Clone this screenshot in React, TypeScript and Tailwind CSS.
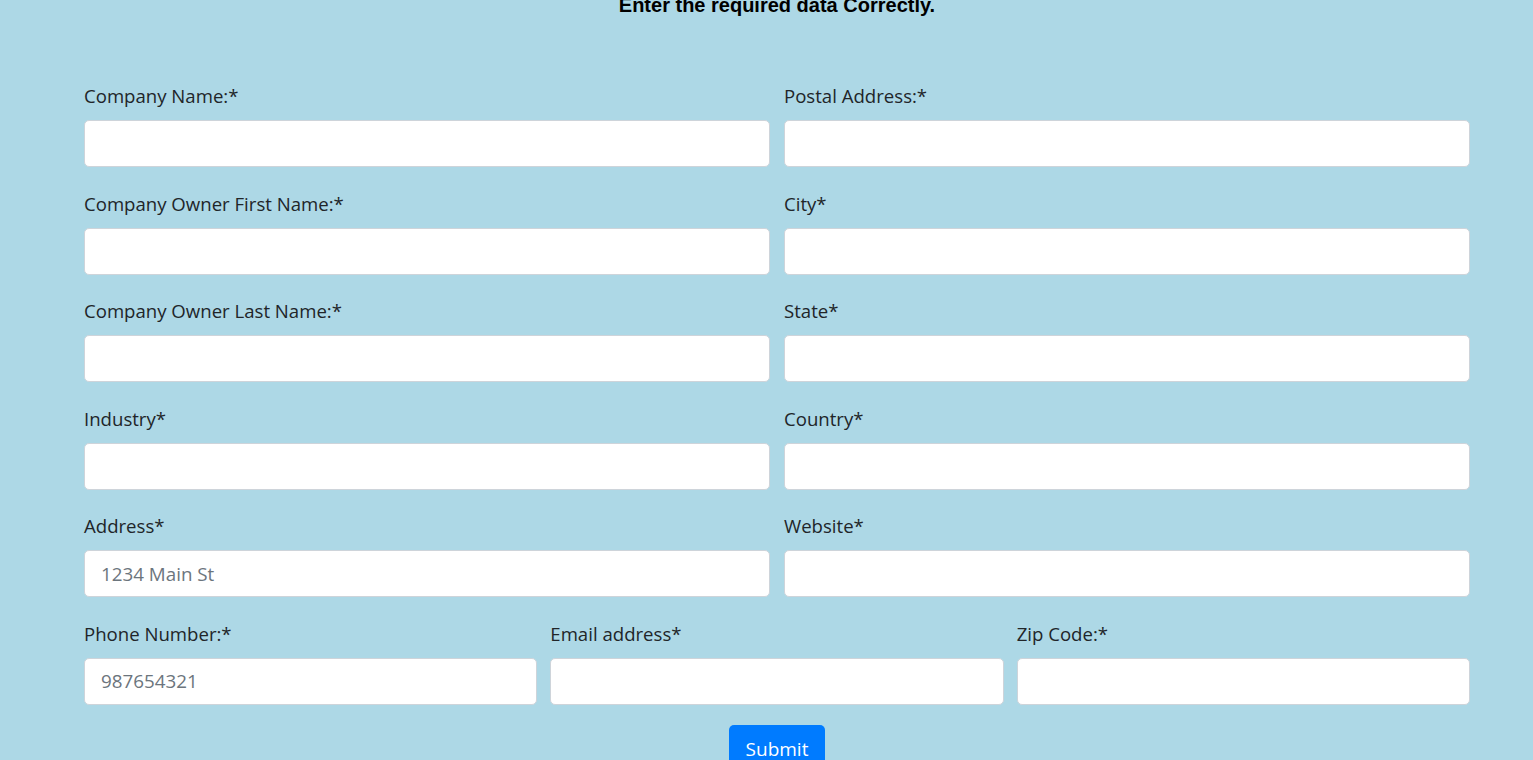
import React from 'react';

const font = { fontFamily: '"Open Sans", "Noto Sans", sans-serif' };

function Field({ label, placeholder }: { label: string; placeholder?: string }) {
  return (
    <div className="flex flex-col">
      <label className="h-6 mb-3 text-[18.6px] leading-6 text-[#212529]">{label}</label>
      <input
        placeholder={placeholder}
        className="h-[47px] w-full bg-white border border-[#ced4da] rounded-[5px] px-4 text-[18.8px] text-[#495057] placeholder:text-[#6c757d] focus:outline-none"
      />
    </div>
  );
}

export default function App() {
  const rows: [string, string, string?][] = [
    ['Company Name:*', 'Postal Address:*'],
    ['Company Owner First Name:*', 'City*'],
    ['Company Owner Last Name:*', 'State*'],
    ['Industry*', 'Country*'],
    ['Address*', 'Website*', '1234 Main St'],
  ];

  return (
    <div className="min-h-[760px] w-full bg-[#add8e6] overflow-hidden" style={font}>
      {/* Title, cut by the top edge as in the page */}
      <div className="ml-[84px] w-[1386px] -mt-[6px] h-[23px] text-center">
        <h5
          className="text-[20px] font-bold text-black leading-[23px]"
          style={{ fontFamily: '"Liberation Sans", Arial, sans-serif' }}
        >
          Enter the required data Correctly.
        </h5>
      </div>

      <form className="ml-[84px] w-[1386px] pt-[67px]">
        {rows.map(([left, right, ph]) => (
          <div key={left} className="grid grid-cols-2 gap-x-[14px] mb-[24.6px]">
            <Field label={left} placeholder={ph} />
            <Field label={right} />
          </div>
        ))}

        <div className="grid grid-cols-3 gap-x-[13px] mb-5">
          <Field label="Phone Number:*" placeholder="987654321" />
          <Field label="Email address*" />
          <Field label="Zip Code:*" />
        </div>

        <div className="flex justify-center">
          <button
            type="button"
            className="h-12 px-[17px] rounded-[5px] bg-[#007bff] text-white text-[19px]"
          >
            Submit
          </button>
        </div>
      </form>
    </div>
  );
}
